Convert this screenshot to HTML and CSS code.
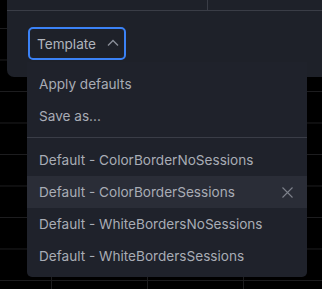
FILE: index.html
```html
<!DOCTYPE html>
<html>
<head>
<meta charset="utf-8">
<link rel="stylesheet" href="styles.css">
</head>
<body>
<div class="stage">
  <div class="panel">
    <div class="toolbar">
      <div class="tool-cell first"></div>
      <div class="tool-cell"></div>
    </div>
    <div class="panel-body">
      <div class="select-wrap">
        <button class="select">
          <span class="select-label">Template</span>
          <svg class="chev" width="12" height="8" viewBox="0 0 12 8"><path d="M1 6.5 L6 1.5 L11 6.5" fill="none" stroke="#8a8e98" stroke-width="1.4"/></svg>
        </button>
        <div class="menu">
          <div class="item">Apply defaults</div>
          <div class="item">Save as...</div>
          <div class="divider"></div>
          <div class="item">Default - ColorBorderNoSessions</div>
          <div class="item active">Default - ColorBorderSessions
            <svg class="close" width="11" height="11" viewBox="0 0 11 11"><path d="M0.5 0.5 L10.5 10.5 M10.5 0.5 L0.5 10.5" stroke="#7d818b" stroke-width="1.1"/></svg>
          </div>
          <div class="item">Default - WhiteBordersNoSessions</div>
          <div class="item">Default - WhiteBordersSessions</div>
        </div>
      </div>
    </div>
  </div>
</div>
</body>
</html>
```
FILE: styles.css
```css
* { box-sizing: border-box; }
html, body { margin: 0; padding: 0; }
body {
  width: 322px;
  height: 289px;
  overflow: hidden;
  background-color: #000;
  background-image:
    linear-gradient(to right, #1d1d1f 1px, transparent 1px),
    linear-gradient(to bottom, #1d1d1f 1px, transparent 1px);
  background-size: 96px 100%, 100% 31.5px;
  background-position: 51px 0, 0 28px;
  font-family: Inter, "Noto Sans", sans-serif;
}
.stage { padding-left: 7px; }
.panel {
  height: 77px;
  background: #1e2129;
  border-bottom-left-radius: 7px;
}
.toolbar {
  display: flex;
  height: 11px;
  border-bottom: 1px solid #3a3d46;
}
.tool-cell.first {
  width: 201px;
  border-right: 1px solid #3a3d46;
}
.panel-body { padding: 16px 0 0 21px; }
.select-wrap { position: relative; width: 98px; }
.select {
  display: flex;
  align-items: center;
  width: 98px;
  height: 33px;
  padding: 0 0 0 7px;
  background: transparent;
  border: 2px solid #3b82f6;
  border-radius: 5px;
  font-family: inherit;
  font-size: 13.6px;
  color: #b0b4bd;
  cursor: pointer;
}
.select-label { flex: 1; text-align: left; }
.chev { margin-right: 5px; margin-top: -2px; }
.menu {
  position: absolute;
  left: -1px;
  top: 35px;
  width: 280px;
  padding: 6px 0 5px;
  background: #1f222b;
  border-radius: 0 0 5px 5px;
  z-index: 2;
}
.item {
  display: flex;
  align-items: center;
  justify-content: space-between;
  height: 32px;
  padding: 0 14px 0 12px;
  font-size: 13.6px;
  color: #a8acb5;
  white-space: nowrap;
}
.item.active { background: #2a2d37; }
.divider {
  height: 1px;
  background: #3a3d47;
  margin: 5px 0 6px;
}
```
